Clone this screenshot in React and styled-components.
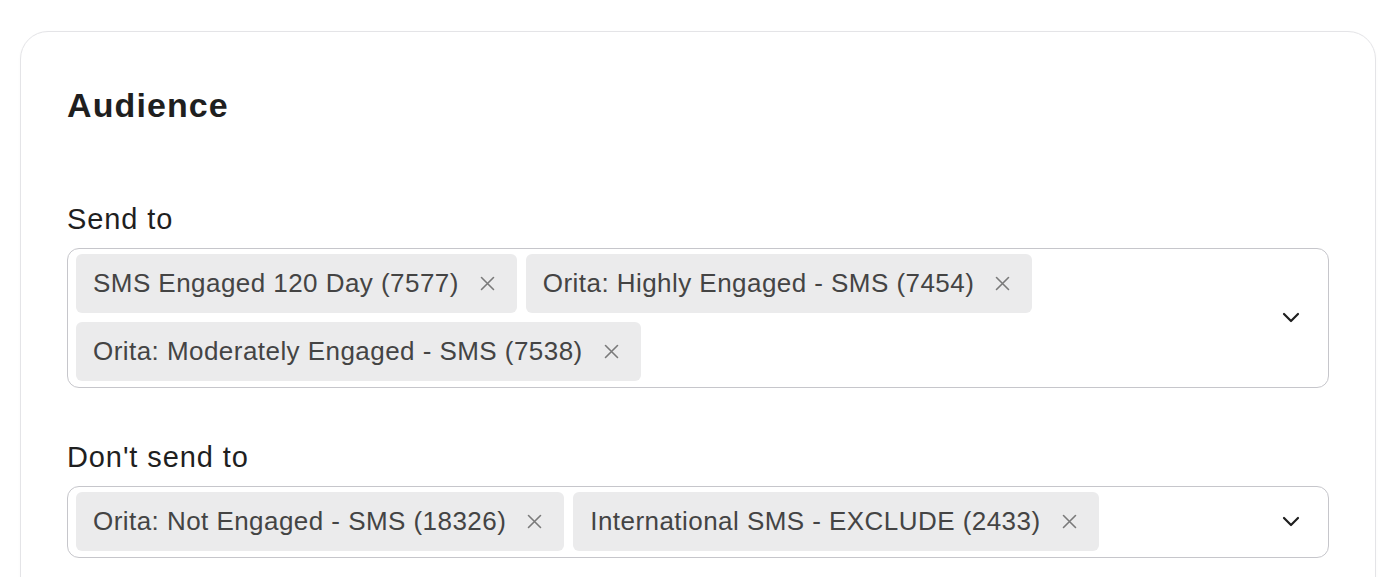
import React from 'react';
import styled, { createGlobalStyle } from 'styled-components';

const GlobalStyle = createGlobalStyle`
  html, body {
    margin: 0;
    padding: 0;
    background: #ffffff;
    font-family: "Liberation Sans", Arial, sans-serif;
    -webkit-font-smoothing: antialiased;
  }
`;

const sendTo = [
  'SMS Engaged 120 Day (7577)',
  'Orita: Highly Engaged - SMS (7454)',
  'Orita: Moderately Engaged - SMS (7538)',
];

const dontSendTo = [
  'Orita: Not Engaged - SMS (18326)',
  'International SMS - EXCLUDE (2433)',
];

function CloseIcon() {
  return (
    <svg width="15" height="15" viewBox="0 0 15 15" fill="none">
      <path d="M1.5 1.5L13.5 13.5M13.5 1.5L1.5 13.5" stroke="#7a7a7a" strokeWidth="1.6" strokeLinecap="round" />
    </svg>
  );
}

function ChevronIcon() {
  return (
    <svg width="18" height="11" viewBox="0 0 18 11" fill="none">
      <path d="M2 2L9 9L16 2" stroke="#1f1f1f" strokeWidth="2.2" strokeLinecap="round" strokeLinejoin="round" />
    </svg>
  );
}

function TagSelect({ label, items }) {
  return (
    <Field>
      <Label>{label}</Label>
      <SelectBox>
        <Chips>
          {items.map((item) => (
            <Chip key={item}>
              <span>{item}</span>
              <RemoveButton aria-label={`Remove ${item}`}>
                <CloseIcon />
              </RemoveButton>
            </Chip>
          ))}
        </Chips>
        <Toggle>
          <ChevronIcon />
        </Toggle>
      </SelectBox>
    </Field>
  );
}

export default function App() {
  return (
    <Page>
      <GlobalStyle />
      <Card>
        <Title>Audience</Title>
        <TagSelect label="Send to" items={sendTo} />
        <TagSelect label="Don't send to" items={dontSendTo} />
      </Card>
    </Page>
  );
}

const Page = styled.div`
  padding: 31px 20px 0;
  height: 577px;
  box-sizing: border-box;
  overflow: hidden;
`;

const Card = styled.section`
  border: 1.5px solid #e4e4e7;
  border-radius: 28px;
  padding: 50px 46px 60px;
  box-shadow: 0 1px 3px rgba(0, 0, 0, 0.03);
`;

const Title = styled.h2`
  margin: 0 0 74px;
  font-size: 34px;
  line-height: 46px;
  font-weight: 700;
  letter-spacing: 1.1px;
  color: #1f1f1f;
`;

const Field = styled.div`
  display: flex;
  flex-direction: column;
  gap: 12px;
  margin-bottom: 52px;
`;

const Label = styled.label`
  font-size: 29px;
  line-height: 34px;
  letter-spacing: 0.9px;
  color: #1f1f1f;
`;

const SelectBox = styled.div`
  display: flex;
  align-items: center;
  border: 1.5px solid #c6c6cb;
  border-radius: 12px;
  padding: 5px 0 6px 8px;
`;

const Chips = styled.div`
  flex: 1;
  display: flex;
  flex-wrap: wrap;
  gap: 9px;
`;

const Chip = styled.div`
  display: flex;
  align-items: center;
  gap: 21px;
  height: 59px;
  padding: 0 22px 0 17px;
  background: #ebebec;
  border-radius: 6px;
  font-size: 26px;
  letter-spacing: 0.45px;
  color: #444444;
`;

const RemoveButton = styled.button`
  display: flex;
  align-items: center;
  padding: 0;
  border: 0;
  background: none;
  cursor: pointer;
`;

const Toggle = styled.div`
  display: flex;
  align-items: center;
  justify-content: center;
  width: 28px;
  margin: 0 23px 0 20px;
`;
